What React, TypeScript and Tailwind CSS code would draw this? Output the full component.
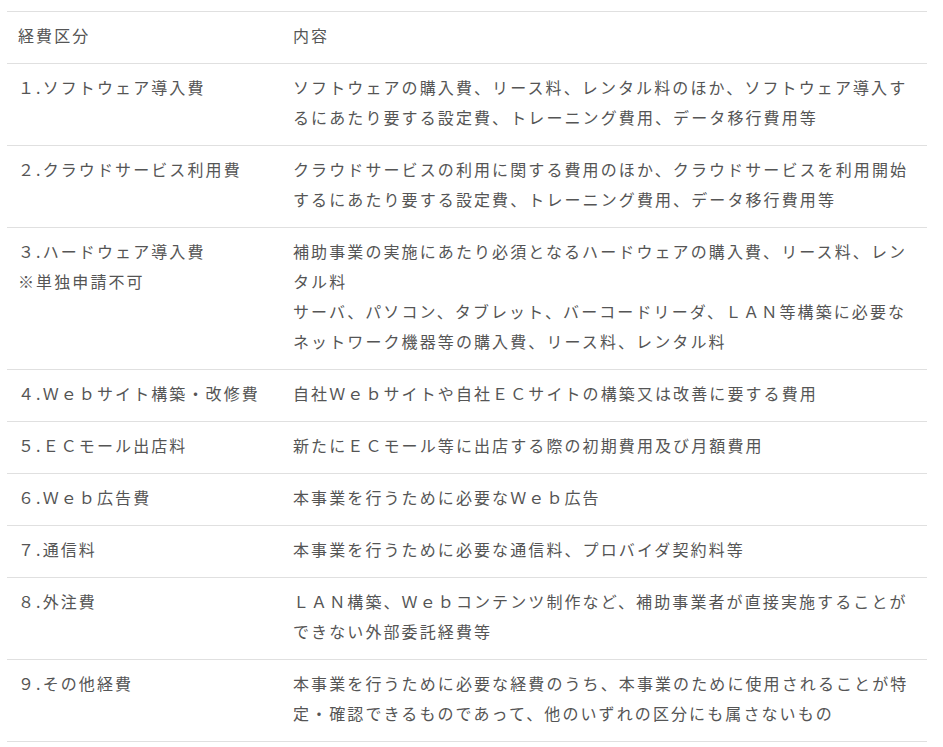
const rows: { label: string[]; content: string[] }[] = [
  {
    label: ["１.ソフトウェア導入費"],
    content: ["ソフトウェアの購入費、リース料、レンタル料のほか、ソフトウェア導入するにあたり要する設定費、トレーニング費用、データ移行費用等"],
  },
  {
    label: ["２.クラウドサービス利用費"],
    content: ["クラウドサービスの利用に関する費用のほか、クラウドサービスを利用開始するにあたり要する設定費、トレーニング費用、データ移行費用等"],
  },
  {
    label: ["３.ハードウェア導入費", "※単独申請不可"],
    content: [
      "補助事業の実施にあたり必須となるハードウェアの購入費、リース料、レンタル料",
      "サーバ、パソコン、タブレット、バーコードリーダ、ＬＡＮ等構築に必要なネットワーク機器等の購入費、リース料、レンタル料",
    ],
  },
  {
    label: ["４.Ｗｅｂサイト構築・改修費"],
    content: ["自社Ｗｅｂサイトや自社ＥＣサイトの構築又は改善に要する費用"],
  },
  {
    label: ["５.ＥＣモール出店料"],
    content: ["新たにＥＣモール等に出店する際の初期費用及び月額費用"],
  },
  {
    label: ["６.Ｗｅｂ広告費"],
    content: ["本事業を行うために必要なＷｅｂ広告"],
  },
  {
    label: ["７.通信料"],
    content: ["本事業を行うために必要な通信料、プロバイダ契約料等"],
  },
  {
    label: ["８.外注費"],
    content: ["ＬＡＮ構築、Ｗｅｂコンテンツ制作など、補助事業者が直接実施することができない外部委託経費等"],
  },
  {
    label: ["９.その他経費"],
    content: ["本事業を行うために必要な経費のうち、本事業のために使用されることが特定・確認できるものであって、他のいずれの区分にも属さないもの"],
  },
];

export default function App() {
  return (
    <div className="min-h-screen bg-white px-[7px] pt-[11px] font-['Noto_Sans_CJK_JP',sans-serif] text-[16px] leading-[30px] tracking-[2.1px] text-[#555555]">
      <table className="w-[920px] table-fixed border-collapse">
        <colgroup>
          <col className="w-[275px]" />
          <col />
        </colgroup>
        <thead>
          <tr className="border-y border-[#e0e0e0]">
            <th className="px-[11px] pt-[8px] pb-[13px] text-left font-normal">経費区分</th>
            <th className="px-[11px] pt-[8px] pb-[13px] text-left font-normal">内容</th>
          </tr>
        </thead>
        <tbody>
          {rows.map((r, i) => (
            <tr key={i} className="border-b border-[#e0e0e0] align-top">
              <td className="px-[11px] pt-[8px] pb-[13px]">
                {r.label.map((l, j) => (
                  <div key={j}>{l}</div>
                ))}
              </td>
              <td className="px-[11px] pt-[8px] pb-[13px]">
                {r.content.map((c, j) => (
                  <div key={j}>{c}</div>
                ))}
              </td>
            </tr>
          ))}
        </tbody>
      </table>
    </div>
  );
}
